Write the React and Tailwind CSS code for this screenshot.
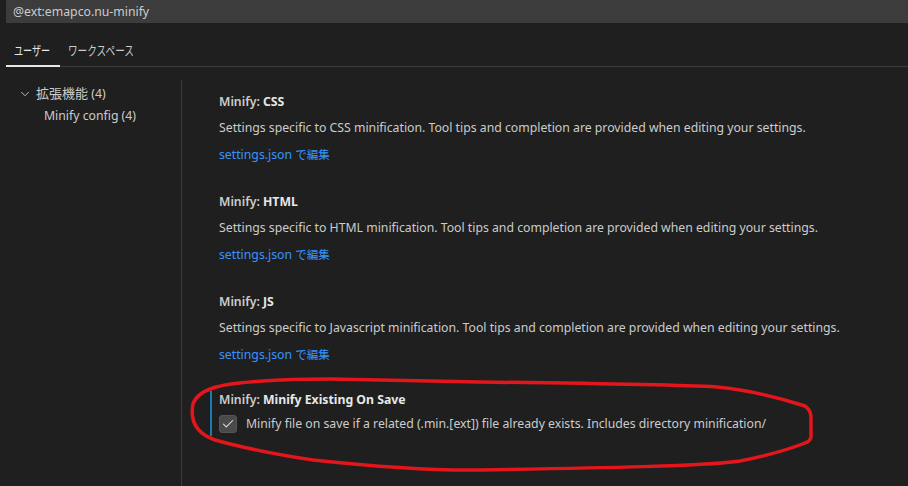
import { Check, ChevronDown } from "lucide-react";

const FONT = "'Segoe UI', 'Noto Sans', 'Noto Sans CJK JP', sans-serif";

const SETTINGS = [
  {
    id: "css",
    label: "CSS",
    description:
      "Settings specific to CSS minification. Tool tips and completion are provided when editing your settings.",
  },
  {
    id: "html",
    label: "HTML",
    description:
      "Settings specific to HTML minification. Tool tips and completion are provided when editing your settings.",
  },
  {
    id: "js",
    label: "JS",
    description:
      "Settings specific to Javascript minification. Tool tips and completion are provided when editing your settings.",
  },
];

function SettingTitle({ label }) {
  return (
    <div className="h-[18px] leading-[18px] font-semibold">
      <span className="text-[#cccccc]">Minify: </span>
      <span className="text-[#e7e7e7] font-bold">{label}</span>
    </div>
  );
}

export default function App() {
  return (
    <div
      className="relative w-[908px] h-[486px] overflow-hidden bg-[#1f1f1f] text-[12.25px] text-[#cccccc] antialiased"
      style={{ fontFamily: FONT }}
    >
      {/* search box */}
      <div className="ml-[6px] h-[23px] bg-[#3c3c3c] pl-[7px] leading-[23px] text-[#cccccc]">
        @ext:emapco.nu-minify
      </div>

      {/* scope tabs */}
      <div className="ml-[6px] mt-[16px] flex h-[28px] border-b border-[#3c3c3c] text-[13px] whitespace-nowrap">
        <div className="relative w-[54px] pl-[8px] leading-[22px] text-[#e7e7e7]">
          <span className="inline-block origin-left scale-x-[0.7]">ユーザー</span>
          <div className="absolute left-0 right-0 bottom-[-1px] h-[2px] bg-[#e7e7e7]" />
        </div>
        <div className="pl-[8px] leading-[22px] text-[#cccccc]">
          <span className="inline-block origin-left scale-x-[0.74]">ワークスペース</span>
        </div>
      </div>

      <div className="flex mt-[13px]">
        {/* tree */}
        <div className="w-[182px] shrink-0 pt-[3px] border-r border-[#3c3c3c] h-[406px]">
          <div className="flex h-[22px] items-center pl-[18px]">
            <ChevronDown size={14} strokeWidth={1.5} className="text-[#cccccc]" />
            <span className="ml-[4px]">
              <span className="text-[13px]">拡張機能</span> (4)
            </span>
          </div>
          <div className="flex h-[22px] items-center pl-[44px]">Minify config (4)</div>
        </div>

        {/* settings list */}
        <div className="flex-1 pl-[28px] pt-[13px]">
          {SETTINGS.map((s) => (
            <div key={s.id} className="border-l-2 border-transparent pl-[7px] pb-[29px]">
              <SettingTitle label={s.label} />
              <div className="mt-[8px] h-[18px] leading-[18px] whitespace-nowrap">{s.description}</div>
              <div className="mt-[9px] h-[18px] leading-[18px] text-[#3794ff] whitespace-nowrap">
                settings.json <span className="text-[11.5px]">で編集</span>
              </div>
            </div>
          ))}
          <div className="-mt-[2px] border-l-2 border-[#1a7cb0] pl-[7px] pb-[3px]">
            <SettingTitle label="Minify Existing On Save" />
            <div className="mt-[6px] flex items-center h-[18px]">
              <div className="flex h-[18px] w-[18px] items-center justify-center rounded-[3px] bg-[#4a4a4a] border border-[#555555]">
                <Check size={14} strokeWidth={1.75} className="text-[#e7e7e7]" />
              </div>
              <span className="ml-[9px] whitespace-nowrap leading-[18px]">
                Minify file on save if a related (.min.[ext]) file already exists. Includes directory minification/
              </span>
            </div>
          </div>
        </div>
      </div>

      {/* hand-drawn annotation */}
      <svg className="pointer-events-none absolute inset-0" width="908" height="486" viewBox="0 0 908 486">
        <path
          d="M 213 388 C 230 382, 280 379, 330 379 L 480 382 C 560 383, 680 385, 717 387 C 750 390, 780 398, 805 406 Q 811 410, 811 418 L 811 436 Q 811 441, 805 443 C 790 449, 770 455, 740 461 C 710 466, 600 468, 480 470 C 420 471, 360 465, 313 460 C 280 455, 240 447, 215 440 C 195 433, 190 420, 193 404 C 196 395, 204 391, 213 388 Z"
          fill="none"
          stroke="#e5161b"
          strokeWidth="3.5"
          strokeLinejoin="round"
        />
      </svg>
    </div>
  );
}
